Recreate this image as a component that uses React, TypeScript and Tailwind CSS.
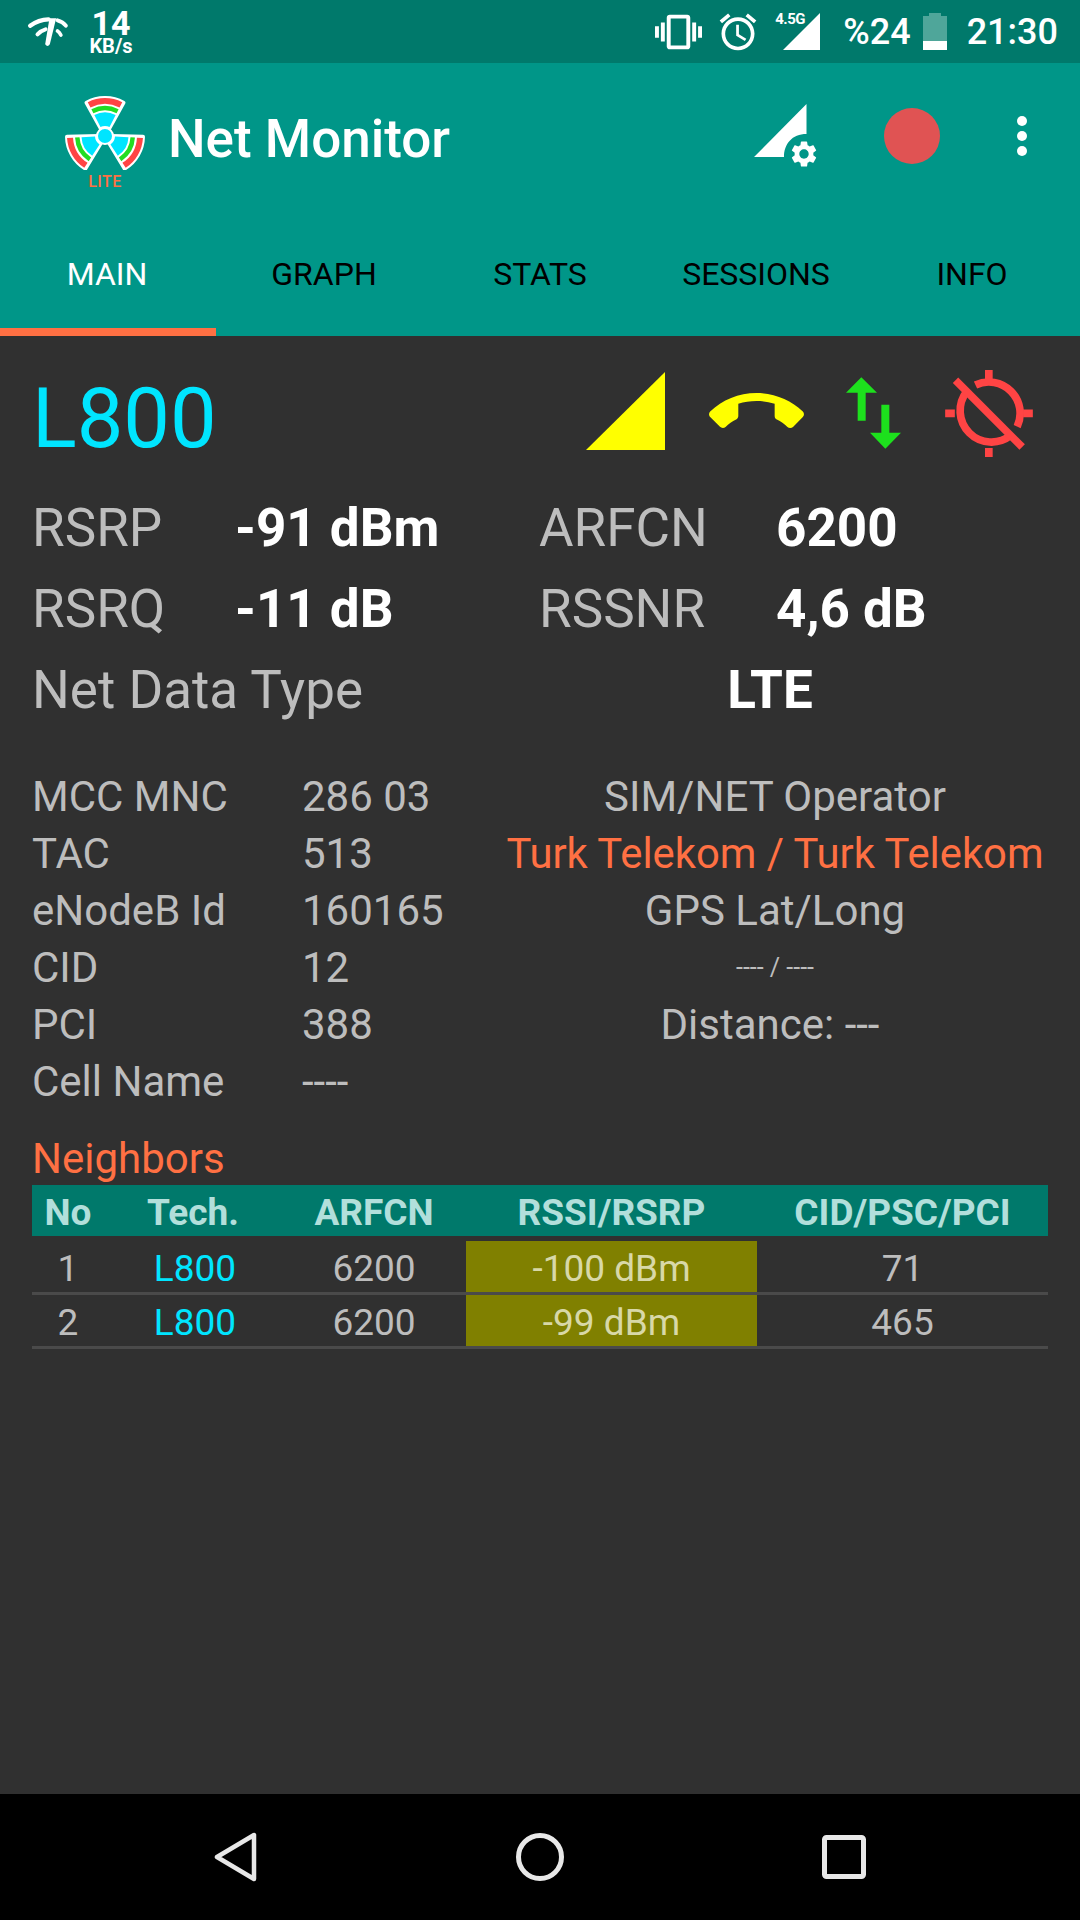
import React from "react";

const sector = (r0: number, r1: number, a: number) => {
  const t = (a * Math.PI) / 180;
  const s = Math.sin(t);
  const c = Math.cos(t);
  const f = (n: number) => n.toFixed(2);
  return `M${f(-r0 * s)} ${f(-r0 * c)}L${f(-r1 * s)} ${f(-r1 * c)}A${r1} ${r1} 0 0 1 ${f(r1 * s)} ${f(-r1 * c)}L${f(r0 * s)} ${f(-r0 * c)}A${r0} ${r0} 0 0 0 ${f(-r0 * s)} ${f(-r0 * c)}Z`;
};

function Logo() {
  return (
    <svg width="80" height="74" viewBox="0 0 80 74" className="block shrink-0">
      <g transform="translate(40 40)">
        {[0, 120, 240].map((r) => (
          <g key={r} transform={`rotate(${r})`}>
            <path d={sector(6, 38, 29)} fill="#ffffff" stroke="#ffffff" strokeWidth="4" strokeLinejoin="round" />
            <path d={sector(10, 23.5, 27)} fill="#00e5ff" />
            <path d={sector(25.5, 30, 27)} fill="#22dd22" />
            <path d={sector(32, 38, 27)} fill="#ff4444" />
          </g>
        ))}
        <circle r="8" fill="#00e5ff" stroke="#ffffff" strokeWidth="2" />
      </g>
    </svg>
  );
}

function SignalGear() {
  return (
    <svg width="64" height="64" viewBox="0 0 64 64" className="block">
      <path d="M0 53L52.5 0V30C38 30 30 40 30 53Z" fill="#ffffff" />
      <g transform="translate(34.4 34.4) scale(1.3)">
        <path
          fill="#ffffff"
          d="M19.14 12.94c.04-.3.06-.61.06-.94 0-.32-.02-.64-.07-.94l2.03-1.58c.18-.14.23-.41.12-.61l-1.92-3.32c-.12-.22-.37-.29-.59-.22l-2.39.96c-.5-.38-1.03-.7-1.62-.94l-.36-2.54c-.04-.24-.24-.41-.48-.41h-3.84c-.24 0-.43.17-.47.41l-.36 2.54c-.59.24-1.13.57-1.62.94l-2.39-.96c-.22-.08-.47 0-.59.22L2.74 8.87c-.12.21-.08.47.12.61l2.03 1.58c-.05.3-.09.63-.09.94s.02.64.07.94l-2.03 1.58c-.18.14-.23.41-.12.61l1.92 3.32c.12.22.37.29.59.22l2.39-.96c.5.38 1.03.7 1.62.94l.36 2.54c.05.24.24.41.48.41h3.84c.24 0 .44-.17.47-.41l.36-2.54c.59-.24 1.13-.56 1.62-.94l2.39.96c.22.08.47 0 .59-.22l1.92-3.32c.12-.22.07-.47-.12-.61l-2.01-1.58zM12 15.6c-1.98 0-3.6-1.62-3.6-3.6s1.62-3.6 3.6-3.6 3.6 1.62 3.6 3.6-1.62 3.6-3.6 3.6z"
        />
      </g>
    </svg>
  );
}

function HeroIcons() {
  return (
    <div className="mb-[2px] flex items-center">
      <svg width="79" height="78" viewBox="0 0 79 78" className="block">
        <path d="M0 78L79 0V78Z" fill="#ffff00" />
      </svg>
      <svg width="95" height="36" viewBox="0 7 24 9.1" className="ml-[44px] block">
        <path
          fill="#ffff00"
          d="M12 9c-1.6 0-3.15.25-4.6.72v3.1c0 .39-.23.74-.56.9-.98.49-1.87 1.12-2.66 1.85-.18.18-.43.28-.7.28-.28 0-.53-.11-.71-.29L.29 13.08c-.18-.17-.29-.42-.29-.7 0-.28.11-.53.29-.71C3.34 8.78 7.46 7 12 7s8.66 1.78 11.71 4.67c.18.18.29.43.29.71 0 .28-.11.53-.29.71l-2.48 2.48c-.18.18-.43.29-.71.29-.27 0-.52-.11-.7-.28-.79-.74-1.69-1.36-2.67-1.85-.33-.16-.56-.5-.56-.9v-3.1C15.15 9.25 13.6 9 12 9z"
        />
      </svg>
      <svg width="55" height="72" viewBox="855 110 165 215" className="ml-[42px] mt-[4px] block">
        <path d="M855 157L901 110L948 157H914V241H890V157Z" fill="#1de01d" />
        <path d="M961 193H985V277H1020L973 325L927 277H961Z" fill="#1de01d" />
      </svg>
      <svg width="88" height="87" viewBox="1157 87 263 261" className="ml-[44px] mt-[4px] block">
        <g stroke="#ff4444" strokeWidth="23" fill="none">
          <path d="M1248 132A94 94 0 0 1 1373 257" />
          <path d="M1222 151A94 94 0 0 0 1354 283" />
          <path d="M1188 118L1388 318" />
          <path d="M1288 87V114M1288 321V348M1157 217H1186M1391 217H1420" />
        </g>
      </svg>
    </div>
  );
}

function StatusBar() {
  return (
    <div className="flex h-[63px] items-center justify-between bg-[#00796b] pl-[27px] pr-[22px] text-white">
      <div className="flex items-center">
        <svg width="42" height="30" viewBox="21 36 125 90" className="block">
          <g fill="none" stroke="#ffffff" strokeLinecap="round">
            <path d="M30 62Q55 44 85 43" strokeWidth="13" />
            <path d="M112 46Q128 50 137 62" strokeWidth="12" />
            <path d="M52 88Q62 77 76 73" strokeWidth="12" />
            <path d="M112 78Q118 82 122 90" strokeWidth="11" />
          </g>
          <path d="M88 40L108 40L89 118Q82 128 75 118Z" fill="#ffffff" />
        </svg>
        <div className="ml-[20px] flex w-[44px] flex-col items-center font-bold">
          <span className="h-[28px] text-[34px] leading-[28px]">14</span>
          <span className="text-[20px] leading-[18px]">KB/s</span>
        </div>
      </div>
      <div className="flex items-center">
        <svg width="47" height="46" viewBox="0 0 24 24" preserveAspectRatio="none" className="block">
          <path fill="#ffffff" d="M0 15h2V9H0v6zm3 2h2V7H3v10zm19-8v6h2V9h-2zm-3 8h2V7h-2v10zM16.5 3h-9C6.67 3 6 3.67 6 4.5v15c0 .83.67 1.5 1.5 1.5h9c.83 0 1.5-.67 1.5-1.5v-15c0-.83-.67-1.5-1.5-1.5zM16 19H8V5h8v14z" />
        </svg>
        <svg width="44" height="44" viewBox="0 0 24 24" className="ml-[14px] block">
          <path fill="#ffffff" d="M22 5.72l-4.6-3.86-1.29 1.53 4.6 3.86L22 5.72zM7.88 3.39L6.6 1.86 2 5.71l1.29 1.53 4.59-3.85zM12.5 8H11v6l4.75 2.85.75-1.23-4-2.37V8zM12 4c-4.97 0-9 4.03-9 9s4.02 9 9 9c4.97 0 9-4.03 9-9s-4.03-9-9-9zm0 16c-3.87 0-7-3.13-7-7s3.13-7 7-7 7 3.13 7 7-3.13 7-7 7z" />
        </svg>
        <div className="relative ml-[15px] h-[37px] w-[45px]">
          <svg width="37" height="37" viewBox="0 0 37 37" className="absolute right-0 top-0 block">
            <path d="M0 37L37 0V37Z" fill="#ffffff" />
          </svg>
          <span className="absolute left-0 top-[-1px] text-[15px] font-bold leading-[15px] tracking-[-0.5px]">4.5G</span>
        </div>
        <span className="ml-[23px] text-[36px] font-medium leading-none">%24</span>
        <div className="ml-[12px] flex h-[37px] w-[24px] flex-col items-center">
          <div className="h-[3px] w-[12px] bg-[#4fa69a]" />
          <div className="h-[25px] w-[24px] bg-[#4fa69a]" />
          <div className="h-[9px] w-[24px] bg-white" />
        </div>
        <span className="ml-[20px] text-[36px] font-medium leading-none">21:30</span>
      </div>
    </div>
  );
}

function AppBar() {
  const tabs = ["MAIN", "GRAPH", "STATS", "SESSIONS", "INFO"];
  return (
    <div className="bg-[#009688]">
      <div className="flex h-[151px] items-start pl-[65px] pt-[33px]">
        <div className="flex flex-col items-center">
          <Logo />
          <span className="mt-[5px] text-[16px] font-medium leading-[14px] tracking-[0.5px] text-[#ff7043]">LITE</span>
        </div>
        <span className="ml-[23px] mt-[9px] text-[53px] font-medium leading-[68px] text-white">Net Monitor</span>
        <div className="ml-auto mt-[8px]">
          <SignalGear />
        </div>
        <div className="ml-[66px] mt-[12px] h-[56px] w-[56px] rounded-full bg-[#e05353]" />
        <div className="ml-[77px] mr-[53px] mt-[20px] flex flex-col gap-[5px]">
          <div className="h-[10px] w-[10px] rounded-full bg-white" />
          <div className="h-[10px] w-[10px] rounded-full bg-white" />
          <div className="h-[10px] w-[10px] rounded-full bg-white" />
        </div>
      </div>
      <div className="grid h-[122px] grid-cols-5">
        {tabs.map((t, i) => (
          <div key={t} className={`flex items-center justify-center border-b-[8px] pt-[6px] text-[32px] leading-none ${i === 0 ? "border-[#ff7043] pr-[2px] text-white" : "border-transparent text-black"}`}>
            {t}
          </div>
        ))}
      </div>
    </div>
  );
}

function Main() {
  const rows: [string, string][] = [
    ["MCC MNC", "286 03"],
    ["TAC", "513"],
    ["eNodeB Id", "160165"],
    ["CID", "12"],
    ["PCI", "388"],
    ["Cell Name", "----"],
  ];
  const right = [
    <span key="a">SIM/NET Operator</span>,
    <span key="b" className="text-[41.8px] text-[#ff7043]">Turk Telekom / Turk Telekom</span>,
    <span key="c">GPS Lat/Long</span>,
    <span key="d" className="text-[25px]">---- / ----</span>,
    <span key="e" className="pr-[10px]">Distance: ---</span>,
    <span key="f" />,
  ];
  return (
    <div className="flex-1 bg-[#303030] px-[32px] text-[#bdbdbd]">
      <div className="flex h-[152px] items-center justify-between pr-[15px]">
        <span className="mt-[12px] text-[83px] leading-none text-[#00e5ff]">L800</span>
        <HeroIcons />
      </div>
      <div className="grid grid-cols-[203px_304px_237px_1fr] text-[53px] leading-[81px]">
        <span>RSRP</span>
        <span className="font-bold text-white">-91 dBm</span>
        <span>ARFCN</span>
        <span className="font-bold text-white">6200</span>
        <span>RSRQ</span>
        <span className="font-bold text-white">-11 dB</span>
        <span>RSSNR</span>
        <span className="font-bold text-white">4,6 dB</span>
      </div>
      <div className="grid grid-cols-[507px_462px] text-[53px] leading-[81px]">
        <span>Net Data Type</span>
        <span className="text-center font-bold text-white">LTE</span>
      </div>
      <div className="mt-[37px] grid grid-cols-[270px_200px_1fr] text-[42px] leading-[57px]">
        {rows.map((r, i) => (
          <React.Fragment key={r[0]}>
            <span>{r[0]}</span>
            <span>{r[1]}</span>
            <div className="flex h-[57px] items-center justify-center">{right[i]}</div>
          </React.Fragment>
        ))}
      </div>
      <div className="mt-[23px] text-[42px] leading-[52px] text-[#ff7043]">Neighbors</div>
      <div className="grid h-[51px] w-[1016px] grid-cols-[72px_178px_184px_291px_291px] items-center bg-[#00796b] text-center text-[37px] font-bold leading-none text-[#b2dfdb]">
        <span className="pt-[3px]">No</span>
        <span className="pt-[3px]">Tech.</span>
        <span className="pt-[3px]">ARFCN</span>
        <span className="pt-[3px]">RSSI/RSRP</span>
        <span className="pt-[3px]">CID/PSC/PCI</span>
      </div>
      <div className="w-[1016px] pt-[5px] text-center text-[37px] leading-none">
        {[
          ["1", "6200", "-100 dBm", "71"],
          ["2", "6200", "-99 dBm", "465"],
        ].map((r) => (
          <div key={r[0]} className="grid h-[54px] grid-cols-[72px_178px_184px_291px_291px] items-center border-b-[3px] border-[#4a4a4a]">
            <span className="pt-[3px]">{r[0]}</span>
            <span className="pl-[4px] pt-[3px] text-[#00e5ff]">L800</span>
            <span className="pt-[3px]">{r[1]}</span>
            <span className="flex h-full items-center justify-center bg-[#808000] pt-[3px] text-[#d8d8a8]">{r[2]}</span>
            <span className="pt-[3px]">{r[3]}</span>
          </div>
        ))}
      </div>
    </div>
  );
}

function NavBar() {
  return (
    <div className="flex h-[126px] items-center justify-between bg-black px-[213px]">
      <svg width="45" height="52" viewBox="0 0 45 52" className="block">
        <path d="M41 4V48L4 26Z" fill="none" stroke="#e8e8e8" strokeWidth="4.5" strokeLinejoin="round" />
      </svg>
      <svg width="50" height="50" viewBox="0 0 50 50" className="block">
        <circle cx="25" cy="25" r="21.5" fill="none" stroke="#e8e8e8" strokeWidth="5" />
      </svg>
      <svg width="46" height="46" viewBox="0 0 46 46" className="block">
        <rect x="3.5" y="3.5" width="39" height="39" rx="2" fill="none" stroke="#e8e8e8" strokeWidth="5" />
      </svg>
    </div>
  );
}

export default function App() {
  return (
    <div className="flex h-[1920px] w-[1080px] flex-col overflow-hidden font-['Roboto',sans-serif]">
      <StatusBar />
      <AppBar />
      <Main />
      <NavBar />
    </div>
  );
}
